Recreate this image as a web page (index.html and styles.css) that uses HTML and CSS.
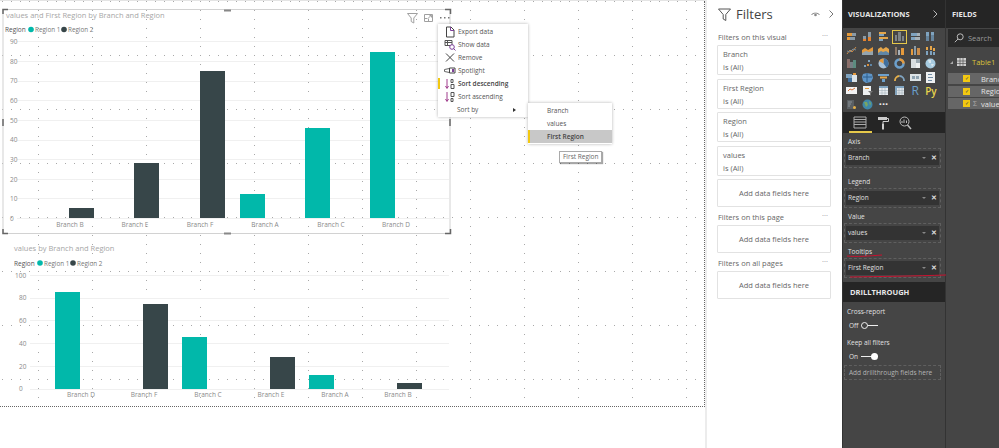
FILE: index.html
```html
<!DOCTYPE html>
<html lang="en">
  <head>
    <meta charset="UTF-8" />
    <title>Report view</title>
    <link rel="stylesheet" href="styles.css">
  </head>
  <body>
    <div class="app">
      <main class="canvas">
        <svg class="dots" width="704" height="405">
          <defs>
            <pattern id="dot-grid" x="38" y="0" width="54" height="54" patternUnits="userSpaceOnUse">
              <path d="M0 0h1v1H0zM0 9h1v1H0zM0 18h1v1H0zM0 27h1v1H0zM0 36h1v1H0zM0 45h1v1H0zM9 0h1v1H9zM18 0h1v1h-1zM27 0h1v1h-1zM36 0h1v1h-1zM45 0h1v1h-1z" fill="#a8a8a8" />
            </pattern>
          </defs>
          <rect width="704" height="405" fill="url(#dot-grid)" />
        </svg>

        <!-- selected visual -->
        <svg class="visual" width="460" height="240">
          <text class="chart-title" x="6" y="18">values and First Region by Branch and Region</text>
          <text class="legend-name" x="5" y="32">Region</text>
          <circle cx="31" cy="29.5" r="2.8" fill="#01b8aa" />
          <text class="legend" x="35" y="32">Region 1</text>
          <circle cx="64" cy="29.5" r="2.8" fill="#374649" />
          <text class="legend" x="68" y="32">Region 2</text>

          <g class="gridlines">
            <path d="M17 41.5h432M17 61.5h432M17 81.5h432M17 100.5h432M17 120.5h432M17 140.5h432M17 159.5h432M17 179.5h432M17 198.5h432M17 218.5h432" />
          </g>
          <g class="axis">
            <text x="10" y="44">90</text>
            <text x="10" y="64">80</text>
            <text x="10" y="83">70</text>
            <text x="10" y="103">60</text>
            <text x="10" y="123">50</text>
            <text x="10" y="142">40</text>
            <text x="10" y="162">30</text>
            <text x="10" y="182">20</text>
            <text x="10" y="201">10</text>
            <text x="10" y="221">0</text>
          </g>
          <rect class="bar-dark" x="69" y="208" width="25" height="10" />
          <rect class="bar-dark" x="134" y="163" width="25" height="55" />
          <rect class="bar-dark" x="200" y="71" width="25" height="147" />
          <rect class="bar-teal" x="240" y="194" width="25" height="24" />
          <rect class="bar-teal" x="305" y="128" width="25" height="90" />
          <rect class="bar-teal" x="370" y="52" width="25" height="166" />
          <g class="axis-x">
            <text x="70" y="227">Branch B</text>
            <text x="135" y="227">Branch E</text>
            <text x="200" y="227">Branch F</text>
            <text x="265" y="227">Branch A</text>
            <text x="331" y="227">Branch C</text>
            <text x="396" y="227">Branch D</text>
          </g>

          <rect class="frame" x="3" y="9.5" width="447" height="224" />
          <path class="handle-corner" d="M3 14V9.5h5M3 229v4.5h5M445 9.5h5.5V14M445 233.5h5.500V229" />
          <path class="handle-mid" d="M224 10.500h7M224 233.500h7M3 119v7M450 119v7" />

          <path class="header-icon" d="M407.500 13.500h10l-3.700 4.500v5l-2.600-1.500v-3.500z" />
          <path class="header-icon" d="M424.500 14.500h8v7h-8zM427.500 18.500h-3M428.500 18.500v3M428.500 18l2.500-2.500M429.500 15.500h2v2" />
          <path class="header-dots" d="M440 17h1.500v1.500H440zM444 17h1.500v1.500H444zM448 17h1.500v1.500H448z" />
        </svg>

        <svg class="visual" width="460" height="405">
          <text class="chart-title" x="14" y="251">values by Branch and Region</text>
          <text class="legend-name" x="14" y="266">Region</text>
          <circle cx="40" cy="263" r="2.800" fill="#01b8aa" />
          <text class="legend" x="44" y="266">Region 1</text>
          <circle cx="73" cy="263" r="2.800" fill="#374649" />
          <text class="legend" x="77" y="266">Region 2</text>

          <g class="gridlines">
            <path d="M30 275.500h419M30 298.500h419M30 320.500h419M30 343.500h419M30 366.500h419M30 389.500h419" />
          </g>
          <g class="axis">
            <text x="15" y="278">100</text>
            <text x="19" y="300">80</text>
            <text x="19" y="323">60</text>
            <text x="19" y="346">40</text>
            <text x="19" y="369">20</text>
            <text x="19" y="391">0</text>
          </g>
          <rect class="bar-teal" x="55" y="292" width="25" height="97" />
          <rect class="bar-dark" x="143" y="304" width="25" height="85" />
          <rect class="bar-teal" x="182" y="337" width="25" height="52" />
          <rect class="bar-dark" x="270" y="357" width="25" height="32" />
          <rect class="bar-teal" x="309" y="375" width="25" height="14" />
          <rect class="bar-dark" x="397" y="383" width="25" height="6" />
          <g class="axis-x">
            <text x="81" y="397">Branch D</text>
            <text x="144" y="397">Branch F</text>
            <text x="208" y="397">Branch C</text>
            <text x="271" y="397">Branch E</text>
            <text x="335" y="397">Branch A</text>
            <text x="398" y="397">Branch B</text>
          </g>
        </svg>

        <ul class="menu">
          <li class="menu-item">
            <svg class="menu-icon" width="12" height="12" viewBox="0 0 12 12"><path d="M2.500 1h4.500l3 3v7h-7.500z" fill="none" stroke="#444" /><path d="M6.500 1v3.500h3.500" fill="none" stroke="#7d3f98" /></svg>
            Export data
          </li>
          <li class="menu-item">
            <svg class="menu-icon" width="12" height="12" viewBox="0 0 12 12"><path d="M1 1.500h7v5h-7zM1 3.500h7M3.500 1.500v5" fill="none" stroke="#555" /><circle cx="8" cy="8" r="2.300" fill="#fff" stroke="#7d3f98" /><path d="M9.500 9.500l2 2" stroke="#7d3f98" /></svg>
            Show data
          </li>
          <li class="menu-item">
            <svg class="menu-icon" width="12" height="12" viewBox="0 0 12 12"><path d="M2 1.500l8 8M10 1.500l-8 8" fill="none" stroke="#444" /></svg>
            Remove
          </li>
          <li class="menu-item">
            <svg class="menu-icon" width="12" height="12" viewBox="0 0 12 12"><path d="M.5 4.500l5-1v4l-5-1z" fill="none" stroke="#666" /><path d="M5.500 3h5.500v5h-5.500z" fill="none" stroke="#444" /><path d="M8 4h2v3h-2z" fill="#7d3f98" /></svg>
            Spotlight
          </li>
          <li class="menu-item is-active">
            <svg class="menu-icon" width="12" height="12" viewBox="0 0 12 12"><path d="M3 1v9M1.500 8l1.500 2.500 1.500-2.500" fill="none" stroke="#a03c8c" /><path d="M7 1.500h2v3h-2zM7 6.500h3v4h-3z" fill="none" stroke="#555" /></svg>
            Sort descending
          </li>
          <li class="menu-item">
            <svg class="menu-icon" width="12" height="12" viewBox="0 0 12 12"><path d="M3 1v9M1.500 8l1.500 2.500 1.500-2.500" fill="none" stroke="#a03c8c" /><path d="M7 1.500h3v4h-3zM7 7.500h2v3h-2z" fill="none" stroke="#555" /></svg>
            Sort ascending
          </li>
          <li class="menu-item has-sub">Sort by<span class="sub-arrow"></span></li>
        </ul>

        <ul class="submenu">
          <li class="submenu-item">Branch</li>
          <li class="submenu-item">values</li>
          <li class="submenu-item is-current">First Region</li>
        </ul>
        <div class="tip">First Region</div>
      </main>

      <aside class="filters">
        <header class="filters-head">
          <svg width="13" height="13" viewBox="0 0 13 13"><path d="M.5 1h12l-4.700 5.500v6l-2.600-1.500v-4.500z" fill="none" stroke="#555" /></svg>
          <h1 class="filters-title">Filters</h1>
          <svg class="eye" width="9" height="6" viewBox="0 0 9 6"><path d="M.5 4c1-2.500 7-2.500 8 0" fill="none" stroke="#888" /><circle cx="4.500" cy="4" r="1.300" fill="#888" /></svg>
          <svg class="chev" width="5" height="8" viewBox="0 0 5 8"><path d="M.5 .5l3.500 3.500-3.500 3.500" fill="none" stroke="#777" /></svg>
        </header>

        <div class="filter-head"><span>Filters on this visual</span><span class="more">···</span></div>
        <div class="filter-cards">
          <div class="filter-card"><div>Branch</div><div>is (All)</div></div>
          <div class="filter-card"><div>First Region</div><div>is (All)</div></div>
          <div class="filter-card"><div>Region</div><div>is (All)</div></div>
          <div class="filter-card"><div>values</div><div>is (All)</div></div>
          <div class="filter-add">Add data fields here</div>
        </div>

        <div class="filter-head"><span>Filters on this page</span><span class="more">···</span></div>
        <div class="filter-cards">
          <div class="filter-add">Add data fields here</div>
        </div>

        <div class="filter-head"><span>Filters on all pages</span><span class="more">···</span></div>
        <div class="filter-cards">
          <div class="filter-add">Add data fields here</div>
        </div>
      </aside>

      <section class="viz">
        <header class="pane-head">
          <h2>VISUALIZATIONS</h2>
          <svg width="5" height="8" viewBox="0 0 5 8"><path d="M.5 .5l3.500 3.500-3.500 3.500" fill="none" stroke="#bbb" /></svg>
        </header>

        <div class="viz-icons">
          <svg width="11" height="11"><path d="M1 2h5v3H1z" fill="#e59a3c"/><path d="M6 2h4v3H6z" fill="#8a9aa6"/><path d="M1 6h3v3H1z" fill="#e59a3c"/><path d="M4 6h5v3H4z" fill="#8a9aa6"/></svg>
          <svg width="11" height="11"><path d="M1 5h3v5H1z" fill="#8a9aa6"/><path d="M6 1h3v5H6z" fill="#8a9aa6"/><path d="M6 6h3v4H6z" fill="#e5832e"/><path d="M1 8h3v2H1z" fill="#e5832e"/></svg>
          <svg width="11" height="11"><path d="M1 1h7v2H1zM1 6h9v2H1z" fill="#e5a64a"/><path d="M1 3h5v2H1zM1 8h4v2H1z" fill="#7fa3bf"/></svg>
          <span class="viz-icon-on"><svg width="11" height="11"><path d="M1 4h2v6H1zM4 1h3v9H4zM8 5h2v5H8z" fill="#7d8488"/></svg></span>
          <svg width="11" height="11"><path d="M1 2h6v3H1zM1 6h4v3H1z" fill="#7fa3bf"/><path d="M7 2h3v3H7zM5 6h5v3H5z" fill="#a8b2b8"/></svg>
          <svg width="11" height="11"><path d="M1 1h3v4H1zM6 1h3v3H6z" fill="#7fa3bf"/><path d="M1 5h3v5H1zM6 4h3v6H6z" fill="#66859e"/></svg>

          <svg width="11" height="11"><path d="M1 9l3-4 2 2 4-5" fill="none" stroke="#c98b4a"/><path d="M1 6l3 1 3-3 3 1" fill="none" stroke="#7b8b96"/></svg>
          <svg width="11" height="11"><path d="M0 5l3-2 3 2 5-3v8H0z" fill="#e59a3c"/><path d="M0 8l4-2 3 1 4-1v4H0z" fill="#94a4ae"/></svg>
          <svg width="11" height="11"><path d="M0 4l3-2 2 2 3-2 3 2v6H0z" fill="#e5a64a"/><path d="M0 8l3-2 2 1 3-1 3 2v2H0z" fill="#5f86a6"/></svg>
          <svg width="11" height="11"><path d="M1 2h2v8H1z" fill="#8e7a68"/><path d="M4 5h2v5H4z" fill="#a8b2b8"/><path d="M7 3h3v7H7z" fill="#e59a3c"/></svg>
          <svg width="11" height="11"><path d="M1 4h2v6H1z" fill="#e59a3c"/><path d="M4 1h2v9H4z" fill="#8a9aa6"/><path d="M7 3h3v7H7z" fill="#c98b4a"/></svg>
          <svg width="11" height="11"><path d="M1 2h2v3H1zM5 1h2v4H5zM8 3h2v3H8z" fill="#e5a64a"/><path d="M1 6h2v4H1zM5 6h2v4H5zM8 7h2v3H8z" fill="#7fa3bf"/></svg>

          <svg width="11" height="11"><path d="M1 1h3v9H1z" fill="#8b6f6a"/><path d="M4 4h3v6H4z" fill="#777f85"/><path d="M7 2h3v8H7z" fill="#5c8c80"/></svg>
          <svg width="11" height="11"><path d="M2 7h2v2H2zM6 2h2v2H6z" fill="#7fa3bf"/><path d="M5 6h2v2H5z" fill="#d9903c"/><path d="M8 6h2v2H8z" fill="#5f86a6"/></svg>
          <svg width="11" height="11"><circle cx="5.500" cy="5.500" r="5" fill="#a9c2d8"/><path d="M5.500 5.500V.5a5 5 0 0 1 3 9z" fill="#3f6f9e"/><path d="M5.500 5.500L1 3a5 5 0 0 1 4.500-2.500z" fill="#e59a3c"/></svg>
          <svg width="11" height="11"><circle cx="5.500" cy="5.500" r="4" fill="none" stroke="#6ca0cc" stroke-width="2.500"/><path d="M5.500 1.500a4 4 0 0 1 4 4" fill="none" stroke="#e59a3c" stroke-width="2.500"/></svg>
          <svg width="11" height="11"><path d="M1 1h5v9H1z" fill="#d8dde0"/><path d="M6 1h4v4H6z" fill="#9aa7b0"/><path d="M6 5h4v5H6z" fill="#eef0f1"/></svg>
          <svg width="11" height="11"><circle cx="5.500" cy="5.500" r="5" fill="#a7cbe0"/><path d="M3 2h3v3H4zM6 6h3l-2 3z" fill="#d9e7ee"/></svg>

          <svg width="11" height="11"><path d="M0 2h6v4H0z" fill="#7fa3bf"/><path d="M6 3h5v7H6z" fill="#dbe3e8"/><path d="M2 6h4v4H2z" fill="#3f6f9e"/><path d="M7 1h3v2H7z" fill="#e59a3c"/></svg>
          <svg width="11" height="11"><path d="M1 2l4-1 5 1 1 4-2 4-5 1-3-2-1-4z" fill="#5f95c7"/><path d="M1 5h9M5 1v9" stroke="#2f5f8c"/></svg>
          <svg width="11" height="11"><path d="M0 2h11v2H0z" fill="#6ca0cc"/><path d="M2 4.500h7v2H2z" fill="#e5a64a"/><path d="M4 7h3v3H4z" fill="#6ca0cc"/></svg>
          <svg width="11" height="11"><path d="M1 9a4.500 4.500 0 0 1 4.500-5" fill="none" stroke="#e5b04a" stroke-width="1.800"/><path d="M5.500 4A4.500 4.500 0 0 1 10 9" fill="none" stroke="#7fa3bf" stroke-width="1.800"/></svg>
          <svg width="11" height="11"><path d="M0 2h11v7H0z" fill="#dde3e7"/><path d="M2 4h3v3H2zM6 4h3v3H6z" fill="#8fa3b2"/></svg>
          <svg width="11" height="11"><path d="M1 0h9v11H1z" fill="#eef0f1"/><path d="M3 2h4v1H3zM3 5h5v1H3zM3 8h4v1H3z" fill="#6f8ba3"/></svg>

          <svg width="11" height="11"><path d="M0 2h11v7H0z" fill="#f2f2f2"/><path d="M2 6l2-2 2 1 3-2" fill="none" stroke="#d9763c"/></svg>
          <svg width="11" height="11"><path d="M1 1h8v9H1z" fill="#eef0f1"/><path d="M3 3h4v1H3z" fill="#e59a3c"/><path d="M6 6h5l-2 2v3l-1-1V8z" fill="#777"/></svg>
          <svg width="11" height="11"><path d="M1 1h9v9H1z" fill="#e8ecef"/><path d="M1 1h9v2H1z" fill="#7fa3bf"/><path d="M4 3v7M7 3v7M1 5.500h9M1 8h9" stroke="#99a8b3" stroke-width=".5"/></svg>
          <svg width="11" height="11"><path d="M1 1h9v9H1z" fill="#dfe5e9"/><path d="M1 1h9v2H1zM1 3h2v7H1z" fill="#7fa3bf"/><path d="M5 3v7M8 3v7M1 5.500h9M1 8h9" stroke="#99a8b3" stroke-width=".5"/></svg>
          <span class="viz-r">R</span>
          <span class="viz-py">Py</span>

          <svg width="11" height="11"><path d="M1 1h7v9H1z" fill="#5a5f63"/><path d="M2 3h4M2 5h3M2 7h2" stroke="#8c9499"/><circle cx="8.500" cy="8.500" r="1.500" fill="#e5b04a"/></svg>
          <svg width="11" height="11"><circle cx="5.500" cy="5.500" r="5" fill="#3f87a8"/><path d="M2 3h3l1 3-2 2zM7 2l2 2-1 3z" fill="#7aa662"/></svg>
          <span class="viz-more">···</span>
        </div>

        <nav class="viz-tabs">
          <div class="viz-tab is-on">
            <svg width="14" height="13" viewBox="0 0 14 13"><path d="M1 1h12v11H1zM1 3.500h12M1 6h12M1 8.500h12" fill="none" stroke="#aaa" /></svg>
          </div>
          <div class="viz-tab">
            <svg width="12" height="14" viewBox="0 0 12 14"><path d="M1 1h9v3H1z" fill="#ccc" /><path d="M10 2.500h1.500v3H6v2" fill="none" stroke="#ccc" /><path d="M5 7.500h2v6H5z" fill="#ccc" /></svg>
          </div>
          <div class="viz-tab">
            <svg width="13" height="14" viewBox="0 0 13 14"><circle cx="5.500" cy="5.500" r="4.500" fill="none" stroke="#bbb" /><path d="M8.500 9l3.500 4" stroke="#bbb" stroke-width="1.500" /><path d="M3 7V5M5 7V3.500M7.500 7V4.500" stroke="#bbb" /></svg>
          </div>
        </nav>

        <div class="wells">
          <div class="well-label">Axis</div>
          <div class="well well-first"><div class="well-item"><span>Branch</span><span class="caret"></span><span class="close">✕</span></div></div>
          <div class="well-label">Legend</div>
          <div class="well"><div class="well-item"><span>Region</span><span class="caret"></span><span class="close">✕</span></div></div>
          <div class="well-label">Value</div>
          <div class="well"><div class="well-item"><span>values</span><span class="caret"></span><span class="close">✕</span></div></div>
          <div class="well-label">Tooltips</div>
          <div class="well"><div class="well-item"><span>First Region</span><span class="caret"></span><span class="close">✕</span></div></div>
        </div>

        <h2 class="drill-head">DRILLTHROUGH</h2>
        <div class="drill">
          <div class="drill-label">Cross-report</div>
          <div class="toggle"><span class="toggle-text">Off</span><span class="track track-off"></span></div>
          <div class="drill-label drill-label-next">Keep all filters</div>
          <div class="toggle"><span class="toggle-text">On</span><span class="track track-on"></span></div>
          <div class="drill-add">Add drillthrough fields here</div>
        </div>

        <!-- red pen marks over the pane -->
        <svg class="pen" width="110" height="30">
          <path d="M4 6c9 1 22 0 35-1" fill="none" stroke="#c8102e" />
          <path d="M7 27c30-.5 66-1 96-2" fill="none" stroke="#c8102e" />
        </svg>
      </section>

      <section class="fields">
        <header class="pane-head"><h2>FIELDS</h2></header>
        <div class="search">
          <svg width="10" height="10" viewBox="0 0 10 10"><circle cx="6.200" cy="3.800" r="3" fill="none" stroke="#bbb" /><path d="M4 6L.8 9.200" stroke="#bbb" /></svg>
          <span>Search</span>
        </div>
        <div class="table-row">
          <span class="tree-arrow"></span>
          <svg width="9" height="8" viewBox="0 0 9 8"><path d="M0 0h9v8H0z" fill="#cfcfcf" /><path d="M3 0v8M6 0v8M0 3h9M0 5.500h9" stroke="#555" stroke-width=".7" /></svg>
          <span class="table-name">Table1</span>
        </div>
        <div class="field"><span class="check">✓</span><span class="sigma"></span>Branch</div>
        <div class="field"><span class="check">✓</span><span class="sigma"></span>Region</div>
        <div class="field"><span class="check">✓</span><span class="sigma">Σ</span>values</div>
      </section>
    </div>
  </body>
</html>
```
FILE: styles.css
```css
html,
body {
  margin: 0;
  padding: 0;
}
body {
  width: 999px;
  height: 448px;
  overflow: hidden;
  background: #fff;
  font-family: "Open Sans", "Noto Sans", sans-serif;
}
ul {
  list-style: none;
  margin: 0;
  padding: 0;
}
h1,
h2 {
  margin: 0;
  font-weight: 400;
}
.app {
  display: flex;
  height: 448px;
}

/* canvas */
.canvas {
  position: relative;
  flex: 0 0 705px;
  height: 447px;
  border-top: 1px solid #e4e4e4;
  box-sizing: border-box;
}
.dots {
  position: absolute;
  top: 0;
  left: 0;
  border-right: 1px dotted #666;
  border-bottom: 1px dotted #666;
}
.visual {
  position: absolute;
  top: -1px;
  left: 0;
}
.visual text {
  font-family: "Open Sans", sans-serif;
}
.chart-title {
  font-size: 7.5px;
  fill: #a6a6a6;
}
.legend-name {
  font-size: 6.500px;
  fill: #555;
}
.legend {
  font-size: 6.300px;
  fill: #777;
}
.axis text,
.axis-x text {
  font-size: 6.500px;
  fill: #8a8a8a;
}
.axis-x text {
  text-anchor: middle;
}
.gridlines path {
  stroke: #f0f0f0;
  fill: none;
}
.bar-dark {
  fill: #374649;
}
.bar-teal {
  fill: #01b8aa;
}
.frame {
  fill: none;
  stroke: #d2d2d2;
}
.handle-corner {
  fill: none;
  stroke: #666;
  stroke-width: 1.500;
}
.handle-mid {
  fill: none;
  stroke: #888;
  stroke-width: 2;
}
.header-icon {
  fill: #fff;
  stroke: #a0a0a0;
}
.header-dots {
  fill: #777;
}

/* context menu */
.menu {
  position: absolute;
  top: 23px;
  left: 438px;
  width: 90px;
  height: 93px;
  padding-top: 1px;
  box-sizing: border-box;
  background: #fff;
  box-shadow: 0 0 3px rgba(0, 0, 0, 0.3);
}
.menu-item {
  position: relative;
  display: flex;
  align-items: center;
  height: 13px;
  padding-left: 6px;
  font-size: 6.500px;
  color: #555;
}
.menu-icon {
  flex: none;
  margin-right: 2px;
}
.menu-item.is-active {
  font-weight: 600;
  color: #444;
}
.menu-item.is-active:before {
  content: "";
  position: absolute;
  left: 0;
  top: 1px;
  width: 2px;
  height: 11px;
  background: #f2c811;
}
.menu-item.has-sub {
  padding-left: 19px;
}
.sub-arrow {
  position: absolute;
  right: 12px;
  top: 5px;
  border-left: 3px solid #333;
  border-top: 2px solid transparent;
  border-bottom: 2px solid transparent;
}
.submenu {
  position: absolute;
  top: 102px;
  left: 528px;
  width: 84px;
  padding: 1px 0;
  background: #fff;
  box-shadow: 0 0 3px rgba(0, 0, 0, 0.3);
}
.submenu-item {
  height: 13px;
  line-height: 13px;
  padding-left: 19px;
  font-size: 6.500px;
  color: #555;
}
.submenu-item.is-current {
  background: #c8c8c8;
  border-left: 2px solid #f2c811;
  padding-left: 17px;
  font-weight: 600;
  color: #444;
}
.tip {
  position: absolute;
  top: 150px;
  left: 559px;
  padding: 0 3px;
  height: 10px;
  line-height: 10px;
  font-size: 6.500px;
  color: #666;
  background: #fff;
  border: 1px solid #aaa;
  box-shadow: 1px 1px 1px rgba(0, 0, 0, 0.35);
}

/* filters pane */
.filters {
  flex: 0 0 135px;
  box-sizing: border-box;
  padding: 0 9px 0 10px;
  margin-right: 2px;
  border-left: 2px solid #ececec;
  background: #fff;
  color: #666;
}
.filters-head {
  display: flex;
  align-items: center;
  height: 28px;
  padding-left: 1px;
}
.filters-title {
  flex: 1;
  margin-left: 5px;
  font-size: 13px;
  line-height: 28px;
  color: #444;
}
.eye {
  margin-right: 9px;
}
.chev {
  margin-right: -3px;
}
.filter-head {
  display: flex;
  justify-content: space-between;
  height: 16px;
  padding: 3px 0 0 1px;
  box-sizing: border-box;
  font-size: 7.500px;
  line-height: 12px;
  color: #666;
}
.more {
  margin-right: 3px;
  line-height: 9px;
  color: #888;
}
.filter-cards {
  display: flex;
  flex-direction: column;
  gap: 3.500px;
  margin-top: 1px;
  margin-bottom: 1px;
}
.filter-card {
  height: 30px;
  box-sizing: border-box;
  padding: 2px 5px;
  border: 1px solid #e2e2e2;
  border-radius: 1px;
  font-size: 7.500px;
  line-height: 13px;
  color: #666;
}
.filter-add {
  height: 28px;
  line-height: 26px;
  box-sizing: border-box;
  border: 1px solid #e2e2e2;
  border-radius: 1px;
  text-align: center;
  font-size: 7.500px;
  color: #666;
}

/* visualizations pane */
.viz {
  position: relative;
  flex: 0 0 103px;
  box-sizing: border-box;
  background: #454545;
  border-left: 1px solid #333;
  color: #ddd;
}
.pane-head {
  display: flex;
  align-items: center;
  justify-content: space-between;
  height: 28px;
  padding: 0 7px 0 5px;
  box-sizing: border-box;
  background: #252525;
}
.pane-head h2 {
  font-size: 7.500px;
  font-weight: 700;
  color: #e8e8e8;
}
.viz-icons {
  display: grid;
  grid-template-columns: repeat(6, 15.800px);
  grid-auto-rows: 13.500px;
  justify-items: center;
  align-items: center;
  height: 84px;
  padding: 2px 0 0 1px;
  box-sizing: border-box;
}
.viz-icon-on {
  display: flex;
  align-items: center;
  justify-content: center;
  width: 13px;
  height: 12px;
  border: 1px solid #e5c84a;
}
.viz-r {
  font-size: 12px;
  line-height: 12px;
  color: #6ca0cc;
}
.viz-py {
  font-size: 10px;
  font-weight: 600;
  line-height: 12px;
  color: #e8d44d;
}
.viz-more {
  font-size: 11px;
  font-weight: 700;
  line-height: 12px;
  color: #eee;
}
.viz-tabs {
  display: flex;
  align-items: center;
  height: 21px;
  padding-left: 6px;
  background: #252525;
}
.viz-tab {
  display: flex;
  justify-content: center;
  align-items: center;
  width: 22.500px;
  height: 21px;
  box-sizing: border-box;
  padding-top: 1px;
}
.viz-tab.is-on {
  border-bottom: 2px solid #e5c84a;
}
.wells {
  padding: 1.500px 4px 0 1px;
  height: 149px;
  box-sizing: border-box;
}
.well-label {
  height: 13px;
  padding-left: 4px;
  font-size: 6.500px;
  line-height: 13px;
  color: #e0e0e0;
}
.well {
  height: 20px;
  box-sizing: border-box;
  padding: 2px 1px;
  border: 1px dashed #5f5f5f;
  margin-bottom: 2px;
}
.well-first {
  margin-bottom: 7px;
}
.well-item {
  display: flex;
  align-items: center;
  height: 14px;
  padding: 0 2px;
  background: #333;
  font-size: 6.500px;
  color: #e0e0e0;
}
.well-item span:first-child {
  flex: 1;
}
.caret {
  margin-right: 5px;
  border-top: 2px solid #888;
  border-left: 2px solid transparent;
  border-right: 2px solid transparent;
}
.close {
  font-size: 7px;
  font-weight: 700;
  line-height: 8px;
  color: #ddd;
}
.drill-head {
  height: 20px;
  padding-left: 7px;
  box-sizing: border-box;
  background: #252525;
  font-size: 7.500px;
  font-weight: 700;
  line-height: 21px;
  color: #e8e8e8;
}
.drill {
  padding: 2.500px 4px 0 4px;
}
.drill-label {
  height: 13px;
  font-size: 6.500px;
  line-height: 13px;
  color: #e0e0e0;
}
.drill-label-next {
  margin-top: 3px;
}
.toggle {
  display: flex;
  align-items: center;
  height: 15px;
  padding-left: 2px;
  font-size: 6.500px;
  color: #e0e0e0;
}
.toggle-text {
  width: 12px;
}
.track {
  position: relative;
  display: block;
  width: 17px;
  height: 1px;
  background: #eee;
}
.track:after {
  content: "";
  position: absolute;
  top: -3px;
  width: 7px;
  height: 7px;
  box-sizing: border-box;
  border-radius: 50%;
}
.track-off:after {
  left: 0;
  background: #454545;
  border: 1px solid #eee;
}
.track-on:after {
  right: 0;
  background: #fff;
}
.drill-add {
  height: 15px;
  margin: 1.500px 0 0 -3px;
  border: 1px dashed #5f5f5f;
  box-sizing: border-box;
  padding-left: 4px;
  font-size: 6.500px;
  line-height: 13px;
  color: #b4b4b4;
  white-space: nowrap;
}
.pen {
  position: absolute;
  top: 250px;
  left: 0;
}

/* fields pane */
.fields {
  flex: 1;
  min-width: 0;
  overflow: hidden;
  box-sizing: border-box;
  background: #454545;
  border-left: 1px solid #333;
  color: #ddd;
}
.fields .pane-head {
  padding-left: 6px;
}
.search {
  display: flex;
  align-items: center;
  gap: 4px;
  height: 18px;
  margin: 1px 0 0 2px;
  padding-left: 6px;
  background: #2a2a2a;
  font-size: 7.500px;
  color: #999;
}
.table-row {
  display: flex;
  align-items: center;
  height: 14px;
  margin-top: 8px;
  padding-left: 4px;
  gap: 4px;
  font-size: 7.500px;
}
.tree-arrow {
  border-bottom: 3px solid #aaa;
  border-left: 3px solid transparent;
}
.table-name {
  margin-left: 2px;
  color: #d8c23a;
}
.field {
  display: flex;
  align-items: center;
  height: 11px;
  margin: 0 0 1.500px 2px;
  padding-left: 17px;
  background: #666;
  font-size: 7.500px;
  color: #e4e4e4;
  white-space: nowrap;
}
.table-row + .field {
  margin-top: 4px;
}
.check {
  flex: none;
  width: 7px;
  height: 7px;
  margin-left: -2px;
  background: #f2c811;
  font-size: 5px;
  line-height: 7px;
  text-align: center;
  color: #444;
}
.sigma {
  flex: none;
  width: 8px;
  margin-left: 3px;
  font-size: 7px;
  color: #aaa;
}
```
